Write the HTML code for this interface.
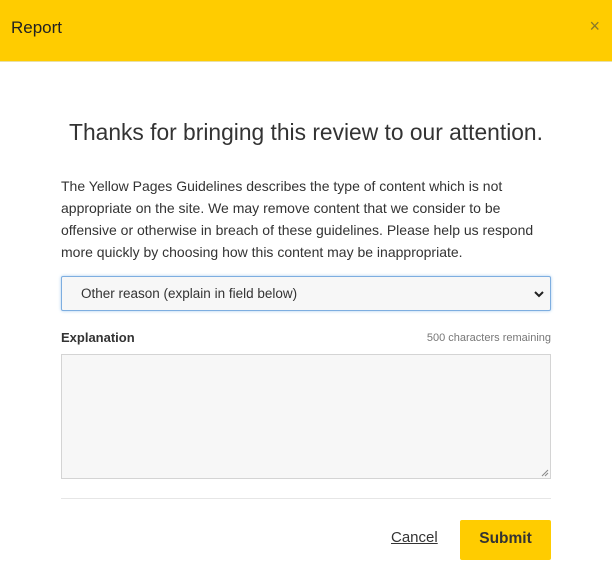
<!DOCTYPE html>
<html><head><meta charset="utf-8"><style>
*{box-sizing:border-box;margin:0;padding:0}
body{width:612px;height:571px;background:#fff;font-family:"Liberation Sans",Arial,sans-serif;color:#333;position:relative;overflow:hidden}
.hdr{position:absolute;left:0;top:0;width:612px;height:62px;background:#ffcc00;border-bottom:1px solid #e8dfa8}
.hdr .t{position:absolute;left:11px;top:18px;font-size:17px;color:#222}
.hdr .x{position:absolute;right:12px;top:16px;font-size:18px;color:#8a7a2a}
h1{position:absolute;left:0;width:612px;top:119px;text-align:center;font-weight:normal;font-size:22.8px;color:#333}
p{position:absolute;left:61px;top:175px;width:495px;font-size:14px;line-height:22px;color:#333}
.sel{position:absolute;left:61px;top:276px;width:490px;height:35px;background:#f7f7f7;border:1px solid #7eaee0;border-radius:2px;box-shadow:0 0 3px #a8cdf0;font-size:13.5px;padding:9px 0 0 19px;color:#333}
.sel svg{position:absolute;right:6px;top:13px}
.lab{position:absolute;left:61px;top:330px;font-size:13px;font-weight:600;color:#333}
.rem{position:absolute;right:61px;top:332px;font-size:11px;color:#777}
.ta{position:absolute;left:61px;top:354px;width:490px;height:125px;background:#f7f7f7;border:1px solid #d4d4d4}
.hr{position:absolute;left:61px;top:498px;width:490px;height:1px;background:#e6e6e6}
.can{position:absolute;left:391px;top:529px;font-size:15px;text-decoration:underline;color:#333}
.sub{position:absolute;left:460px;top:520px;width:91px;height:40px;background:#ffcc00;border-radius:2px;font-size:15.5px;font-weight:bold;text-align:center;line-height:38px;color:#333}
</style></head><body>
<div class="hdr"><span class="t">Report</span><span class="x">×</span></div>
<h1>Thanks for bringing this review to our attention.</h1>
<p>The Yellow Pages Guidelines describes the type of content which is not appropriate on the site. We may remove content that we consider to be offensive or otherwise in breach of these guidelines. Please help us respond more quickly by choosing how this content may be inappropriate.</p>
<div class="sel">Other reason (explain in field below)<svg width="10" height="8" viewBox="0 0 10 8"><path d="M1 2l4 4 4-4" stroke="#222" stroke-width="2" fill="none"/></svg></div>
<div class="lab">Explanation</div>
<div class="rem">500 characters remaining</div>
<div class="ta"><svg style="position:absolute;right:1px;bottom:1px" width="8" height="8"><path d="M7 1L1 7M7 4L4 7" stroke="#888" stroke-width="1"/></svg></div>
<div class="hr"></div>
<span class="can">Cancel</span>
<div class="sub">Submit</div>
</body></html>
